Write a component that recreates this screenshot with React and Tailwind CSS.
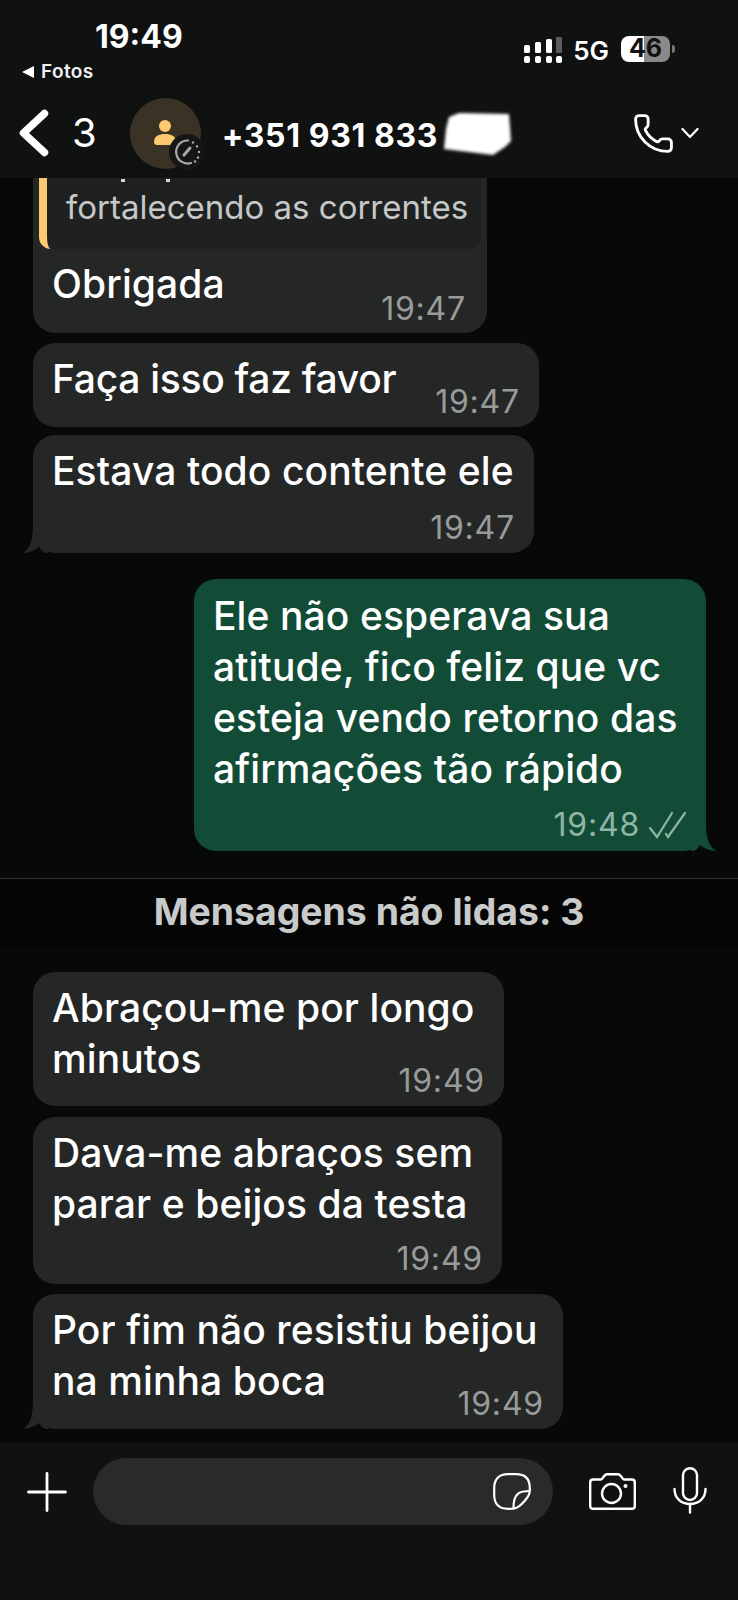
import { Phone } from 'lucide-react';

const font = 'font-["Inter","Liberation_Sans",sans-serif]';

function Tail({ side }) {
  const fill = side === 'right' ? '#134c36' : '#252727';
  const place = side === 'right' ? 'right-[-11px] -scale-x-100' : 'left-[-11px]';
  return (
    <svg className={`absolute bottom-0 ${place}`} width="26" height="28" viewBox="0 0 26 28">
      <path d="M0 28 C7 26 11 16 11 0 H26 V28 H24 C21 28 19 25 17 22 C12 26 6 28 0 28 Z" fill={fill} />
    </svg>
  );
}

function Time({ children }) {
  return <span className="text-[32px] leading-[36px] tracking-[0.8px] text-[#999b9b] whitespace-nowrap">{children}</span>;
}

function Line({ children, tight }) {
  return (
    <div className={`text-[39px] leading-[51px] font-medium text-white whitespace-nowrap ${tight ? 'tracking-[-0.3px]' : 'tracking-[0.1px]'}`}>
      {children}
    </div>
  );
}

function Bubble({ width, height, top, lines, time, tail, tight }) {
  return (
    <div className={`relative ml-[33px] rounded-[22px] bg-[#252727] ${width} ${height} ${top}`}>
      {tail && <Tail side="left" />}
      <div className="relative pl-[19px] pt-[10px]">
        {lines.map((l) => (
          <Line key={l} tight={tight}>{l}</Line>
        ))}
      </div>
      <div className="absolute bottom-[7px] right-[19px]">
        <Time>{time}</Time>
      </div>
    </div>
  );
}

export default function App() {
  return (
    <div className={`w-[738px] h-[1600px] overflow-hidden flex flex-col bg-[#070808] ${font}`}>
      {/* Status + nav */}
      <div className="h-[178px] shrink-0 bg-[#101111] text-white relative z-10">
        <div className="h-[97px] flex justify-between">
          <div className="pl-[22px] pt-[20px]">
            <div className="pl-[73px] text-[32px] leading-[34px] font-bold">19:49</div>
            <div className="flex items-center gap-[7px] mt-[7px]">
              <svg width="12" height="12" viewBox="0 0 12 12"><path d="M12 0 V12 L0 6 Z" fill="#fff" /></svg>
              <span className="text-[19px] leading-[22px] font-semibold tracking-[0.4px] text-[#f0f0f0]">Fotos</span>
            </div>
          </div>
          <div className="flex items-start gap-[11px] pt-[36px] pr-[63px]">
            <svg className="mt-[1px]" width="38" height="27" viewBox="0 0 38 27" fill="#fff">
              <rect x="0" y="8" width="6" height="8" rx="1.5" />
              <rect x="11" y="5" width="6" height="11" rx="1.5" />
              <rect x="22" y="2" width="6" height="14" rx="1.5" />
              <rect x="32" y="0" width="6" height="16" rx="1" fill="#5c5c5c" />
              <rect x="0" y="19" width="6" height="7" rx="2" />
              <rect x="11" y="19" width="6" height="7" rx="2" />
              <rect x="22" y="19" width="6" height="7" rx="2" />
              <rect x="32" y="19" width="6" height="7" rx="2" />
            </svg>
            <span className="text-[26px] leading-[30px] font-semibold">5G</span>
            <div className="flex items-center gap-[2px] ml-[1px]">
              <div className="w-[49px] h-[26px] rounded-[8px] flex items-center justify-center text-[25px] font-bold text-[#111] bg-[linear-gradient(90deg,#ffffff_47%,#8a8a8a_47%)]">46</div>
              <div className="w-[3px] h-[8px] rounded-r-full bg-[#777]"></div>
            </div>
          </div>
        </div>
        <div className="flex items-center h-[72px] pl-[19px]">
          <svg width="30" height="48" viewBox="0 0 30 48" fill="none" stroke="#fff" strokeWidth="7.5" strokeLinecap="round" strokeLinejoin="round">
            <path d="M25.5 4.5 L4.5 24 L25.5 43.5" />
          </svg>
          <span className="ml-[23px] text-[40px] leading-[48px] font-normal">3</span>
          <div className="relative ml-[33px] w-[71px] h-[71px] rounded-full bg-[#3b3226] flex items-center justify-center">
            <svg width="22" height="25" viewBox="0 0 22 25" fill="#fdca72" className="mb-[2px]">
              <circle cx="11" cy="6" r="6" />
              <path d="M0 22 C0 16 5 14 11 14 C17 14 22 16 22 22 Q22 25 19 25 H3 Q0 25 0 22 Z" />
            </svg>
            <div className="absolute right-[-4px] bottom-[-1px] w-[36px] h-[36px] rounded-full bg-[#151616] flex items-center justify-center">
              <svg width="28" height="28" viewBox="0 0 28 28" fill="none" stroke="#a8a8a8" strokeWidth="2.2" strokeLinecap="round">
                <path d="M15 2.5 A11.5 11.5 0 1 0 18 25" />
                <path d="M11 17 L17 10" strokeWidth="3" />
                <circle cx="20" cy="4.5" r="1.2" fill="#a8a8a8" stroke="none" />
                <circle cx="24" cy="8.5" r="1.2" fill="#a8a8a8" stroke="none" />
                <circle cx="26" cy="14" r="1.2" fill="#a8a8a8" stroke="none" />
                <circle cx="25" cy="19.5" r="1.2" fill="#a8a8a8" stroke="none" />
                <circle cx="22" cy="23.5" r="1.2" fill="#a8a8a8" stroke="none" />
              </svg>
            </div>
          </div>
          <span className="ml-[21px] mt-[5px] text-[32px] font-bold tracking-[0.6px] whitespace-nowrap">+351 931 833</span>
          <svg className="ml-[5px] mt-[2px] blur-[1.5px]" width="68" height="42" viewBox="0 0 68 42">
            <path d="M6 4 L16 0 L66 1 L68 28 L62 34 L50 42 L1 36 L3 16 Z" fill="#fff" />
          </svg>
          <div className="ml-auto mr-[39px] flex items-center gap-[6px]">
            <Phone size={43} strokeWidth={1.6} />
            <svg width="18" height="12" viewBox="0 0 18 12" fill="none" stroke="#fff" strokeWidth="2.2" strokeLinecap="round" strokeLinejoin="round">
              <path d="M1.5 2 L9 10 L16.5 2" />
            </svg>
          </div>
        </div>
      </div>

      {/* Messages */}
      <div className="flex-1 flex flex-col min-h-0">
        <div className="relative ml-[33px] w-[454px] h-[155px] rounded-b-[22px] bg-[#252727] px-[6px]">
          <div className="relative h-[71px] bg-[#1f2121] rounded-b-[12px] border-l-[8px] border-[#fdca72] rounded-bl-[12px] pl-[19px] pt-[9px] text-[33px] leading-[40px] text-[#c6c8c8] whitespace-nowrap">
            <div className="absolute left-[74px] top-[1px] w-[4px] h-[3px] bg-[#d8d8d8]"></div>
            <div className="absolute left-[119px] top-[1px] w-[4px] h-[3px] bg-[#d8d8d8]"></div>
            fortalecendo as correntes
          </div>
          <div className="pl-[13px] pt-[9px]">
            <Line>Obrigada</Line>
          </div>
          <div className="absolute right-[21px] bottom-[6px]"><Time>19:47</Time></div>
        </div>
        <Bubble width="w-[506px]" height="h-[84px]" top="mt-[10px]" lines={['Faça isso faz favor']} time="19:47" tight />
        <Bubble width="w-[501px]" height="h-[118px]" top="mt-[8px]" lines={['Estava todo contente ele']} time="19:47" tail />

        <div className="relative ml-[194px] mt-[26px] w-[512px] h-[272px] rounded-[22px] bg-[#134c36] pl-[19px] pt-[11px]">
          <Tail side="right" />
          <div className="relative">
            {['Ele não esperava sua', 'atitude, fico feliz que vc', 'esteja vendo retorno das', 'afirmações tão rápido'].map((l) => (
              <Line key={l}>{l}</Line>
            ))}
          </div>
          <div className="absolute right-[19px] bottom-[8px] flex items-center gap-[9px]">
            <span className="text-[32px] leading-[36px] tracking-[0.8px] text-[#8fb5a5]">19:48</span>
            <svg width="38" height="28" viewBox="0 0 38 28" fill="none" stroke="#8fb5a5" strokeWidth="2.2" strokeLinecap="round">
              <path d="M1 17 L8 26 L23 2" />
              <path d="M17 23 L19 26 L36 2" />
            </svg>
          </div>
        </div>

        <div className="mt-[27px] h-[68px] shrink-0 border-t border-[#333535] bg-[#050505] flex items-center justify-center text-[#c9cbcb] text-[37.4px] font-bold">
          Mensagens não lidas: 3
        </div>

        <Bubble width="w-[471px]" height="h-[134px]" top="mt-[26px]" lines={['Abraçou-me por longo', 'minutos']} time="19:49" />
        <Bubble width="w-[469px]" height="h-[167px]" top="mt-[11px]" lines={['Dava-me abraços sem', 'parar e beijos da testa']} time="19:49" />
        <Bubble width="w-[530px]" height="h-[135px]" top="mt-[10px]" lines={['Por fim não resistiu beijou', 'na minha boca']} time="19:49" tail />

        {/* Input bar */}
        <div className="mt-[14px] flex-1 bg-[#101111] flex items-start pt-[15px]">
          <svg className="ml-[27px] mt-[14px]" width="40" height="40" viewBox="0 0 40 40" stroke="#fff" strokeWidth="2.8" strokeLinecap="round">
            <path d="M20 1.5 V38.5 M1.5 20 H38.5" />
          </svg>
          <div className="ml-[26px] w-[460px] h-[67px] rounded-full bg-[#2a2a2a] flex items-center justify-end pr-[22px]">
            <svg width="38" height="37" viewBox="0 0 38 37" fill="none" stroke="#fff" strokeWidth="2.2" strokeLinejoin="round">
              <path d="M15 1.2 H23 C32 1.2 36.8 6 36.8 15 V18 C36.8 21 35 24 32 27.5 C29 31 26 34 23 35 C21.5 35.6 19 35.8 15 35.8 C6 35.8 1.2 31 1.2 22 V15 C1.2 6 6 1.2 15 1.2 Z" />
              <path d="M36.8 18 C28 18 20 19 20.5 35.6" />
            </svg>
          </div>
          <svg className="ml-[36px] mt-[15px]" width="47" height="37" viewBox="0 0 47 37" fill="none" stroke="#fff" strokeWidth="2.4" strokeLinejoin="round">
            <path d="M4 6.5 H12 C14 6.5 14.5 1.2 18 1.2 H29 C32.5 1.2 33 6.5 35 6.5 H43 Q45.8 6.5 45.8 9.5 V33 Q45.8 35.8 43 35.8 H4 Q1.2 35.8 1.2 33 V9.5 Q1.2 6.5 4 6.5 Z" />
            <circle cx="22.5" cy="20.5" r="9.5" />
            <circle cx="36.5" cy="13" r="2" fill="#fff" stroke="none" />
          </svg>
          <svg className="ml-[37px] mt-[9px]" width="34" height="47" viewBox="0 0 34 47" fill="none" stroke="#fff" strokeWidth="2.4" strokeLinecap="round">
            <rect x="10" y="1.2" width="14" height="31.8" rx="7" />
            <path d="M1.5 22 C1.5 31 8 37 17 37 C26 37 32.5 31 32.5 22" />
            <path d="M17 37 V45.5" />
          </svg>
        </div>
      </div>
    </div>
  );
}
